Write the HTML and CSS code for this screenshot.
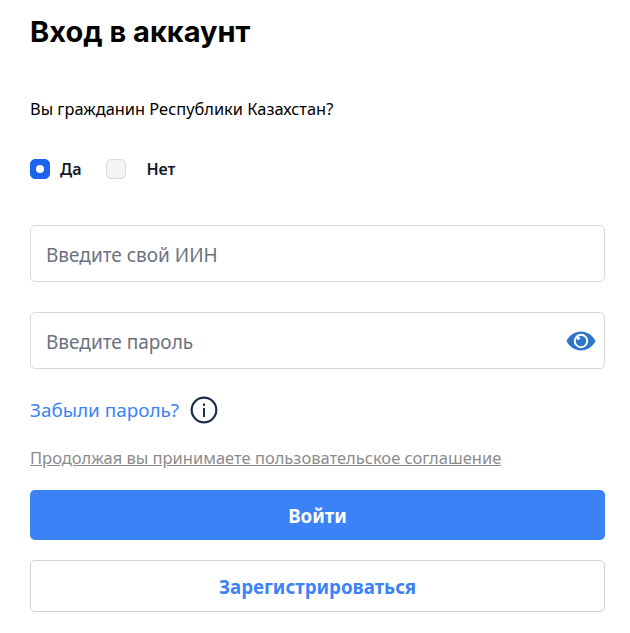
FILE: index.html
```html
<!DOCTYPE html>
<html lang="ru">
<head>
    <meta charset="UTF-8">
    <title>Вход в аккаунт</title>
    <link rel="stylesheet" href="styles.css">
</head>
<body>
    <div class="container">
        <h1>Вход в аккаунт</h1>
        <p class="question">Вы гражданин Республики Казахстан?</p>

        <div class="radio-row">
            <label class="radio-item">
                <span class="radio radio-checked"></span>
                <span>Да</span>
            </label>
            <label class="radio-item radio-item-no">
                <span class="radio"></span>
                <span>Нет</span>
            </label>
        </div>

        <div class="field field-iin">
            <span class="placeholder">Введите свой ИИН</span>
        </div>

        <div class="field field-password">
            <span class="placeholder">Введите пароль</span>
            <svg class="eye-icon" viewBox="0 0 30 20" width="30" height="20">
                <path fill-rule="evenodd" fill="#2f76c9" d="M0.5 10C3.5 4 9 0.6 15 0.6S26.5 4 29.5 10C26.5 16 21 19.4 15 19.4S3.500 16 0.500 10ZM15 2.800a7.200 7.200 0 1 0 0 14.400a7.200 7.200 0 1 0 0-14.400Z"/>
                <circle cx="15" cy="10" r="5.200" fill="#2f76c9"/>
                <circle cx="12.300" cy="7.300" r="1.700" fill="#ffffff"/>
            </svg>
        </div>

        <div class="forgot-row">
            <a class="forgot-link" href="#">Забыли пароль?</a>
            <svg class="info-icon" viewBox="0 0 28 28" width="28" height="28">
                <circle cx="14" cy="14" r="12.300" fill="none" stroke="#1e2a4a" stroke-width="2.200"/>
                <rect x="13" y="12" width="2" height="9" fill="#1e2a4a"/>
                <rect x="13" y="7.500" width="2" height="2.400" fill="#1e2a4a"/>
            </svg>
        </div>

        <a class="agreement" href="#">Продолжая вы принимаете пользовательское соглашение</a>

        <button class="btn-primary">Войти</button>
        <button class="btn-secondary">Зарегистрироваться</button>
    </div>
</body>
</html>
```

FILE: styles.css
```css
body {
    font-family: "Noto Sans", "Open Sans", sans-serif;
    background-color: #ffffff;
    color: #000000;
    margin: 0;
}

.container {
    padding: 12px 25px 20px 30px;
}

h1 {
    font-family: Inter, sans-serif;
    font-size: 29px;
    font-weight: 700;
    line-height: 40px;
    margin: 0;
}

.question {
    font-size: 16.400px;
    line-height: 22px;
    margin: 46px 0 0;
}

.radio-row {
    display: flex;
    align-items: center;
    margin-top: 39px;
    height: 20px;
}

.radio-item {
    display: flex;
    align-items: center;
    gap: 10px;
    font-size: 16px;
    font-weight: 600;
    color: #111827;
}

.radio-item-no {
    gap: 20px;
    margin-left: 25px;
}

.radio {
    width: 18px;
    height: 18px;
    border: 1px solid #d9d9de;
    border-radius: 5px;
    background-color: #f3f4f6;
}

.radio-checked {
    display: flex;
    align-items: center;
    justify-content: center;
    border-color: #1d63ed;
    background-color: #1d63ed;
}

.radio-checked::after {
    content: "";
    width: 8px;
    height: 8px;
    border-radius: 50%;
    background-color: #ffffff;
}

.field {
    display: flex;
    align-items: center;
    justify-content: space-between;
    height: 55px;
    border: 1px solid #d9d9d9;
    border-radius: 5px;
    padding: 0 8.500px 0 15px;
}

.field-iin {
    margin-top: 46px;
}

.field-password {
    margin-top: 30px;
}

.placeholder {
    font-size: 19px;
    padding-top: 2px;
    color: #6b7280;
}

.forgot-row {
    display: flex;
    align-items: center;
    gap: 11px;
    margin-top: 27px;
}

.forgot-link {
    font-size: 18.900px;
    color: #3b82f6;
    text-decoration: none;
}

.agreement {
    display: block;
    margin-top: 23px;
    font-size: 16.500px;
    line-height: 22px;
    color: #8c8c8c;
    text-decoration: underline;
}

button {
    display: block;
    width: 100%;
    font-family: inherit;
    font-size: 18.700px;
    font-weight: 700;
    border-radius: 5px;
    cursor: pointer;
}

.btn-primary {
    height: 50px;
    margin-top: 21px;
    border: none;
    background-color: #3b82f6;
    color: #ffffff;
}

.btn-secondary {
    height: 52px;
    margin-top: 20px;
    border: 1px solid #d1d1d1;
    background-color: #ffffff;
    color: #3b82f6;
}
```
